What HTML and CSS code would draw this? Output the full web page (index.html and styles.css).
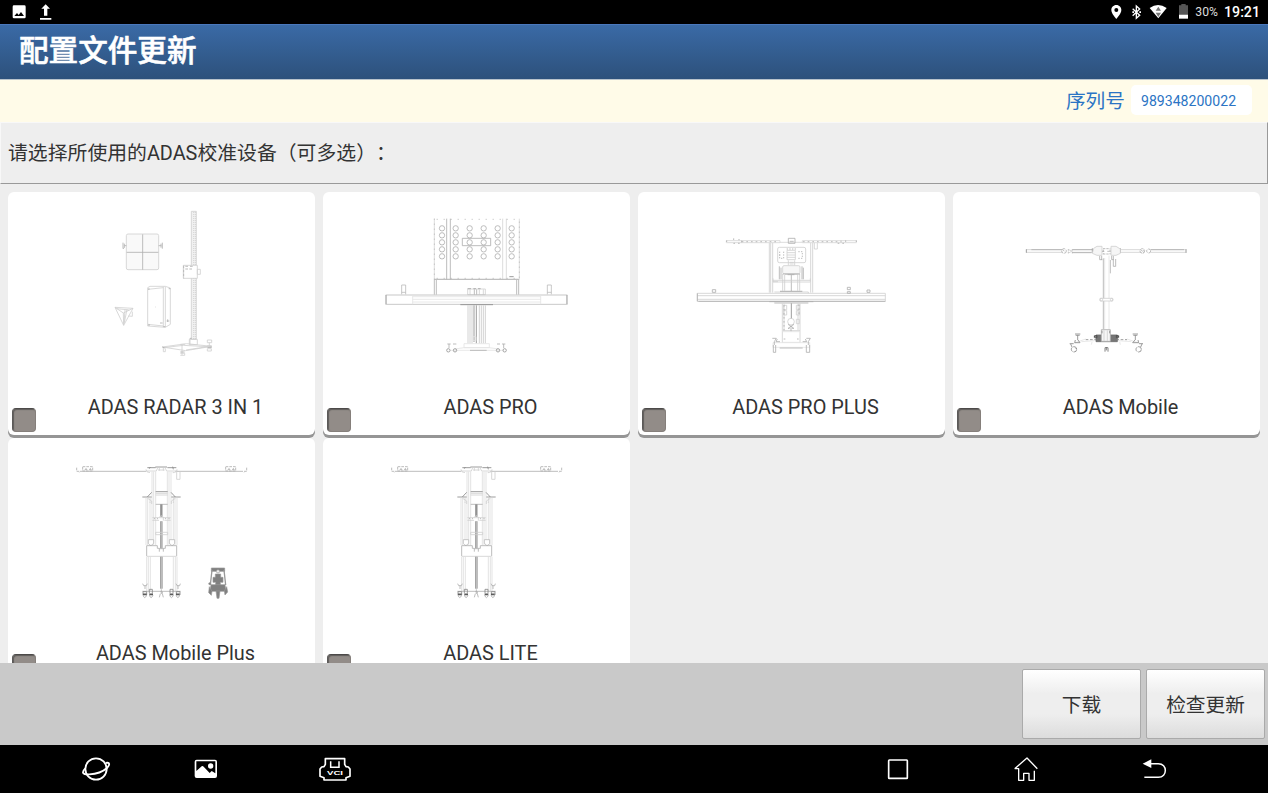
FILE: index.html
```
<!DOCTYPE html>
<html lang="zh-CN">
<head>
    <meta charset="UTF-8">
    <meta name="viewport" content="width=device-width, initial-scale=1.0">
    <title>配置文件更新</title>
    <link rel="stylesheet" href="styles.css">
</head>
<body>

    <div class="status-bar">
        <svg class="status-icons" width="60" height="24" viewBox="0 0 180 72">
            <path fill="#fff" fill-rule="evenodd" d="M42 16h31q4 0 4 4v31q0 4-4 4H42q-4 0-4-4V20q0-4 4-4zM43 48h29l-9-12-7 9-5-6z"/>
            <path fill="#fff" d="M137 13l13 13h-8v21h-10V26h-8zM120 54h34v5h-34z"/>
        </svg>
        <svg class="status-icons" width="80" height="24" viewBox="300 0 240 72">
            <path fill="#fff" fill-rule="evenodd" d="M325 15c-9 0-15 7-15 15 0 11 15 27 15 27s15-16 15-27c0-8-6-15-15-15zm0 9a6 6 0 1 1 0 12 6 6 0 0 1 0-12z"/>
            <path fill="none" stroke="#fff" stroke-width="4" d="M374 26l21 20-10 9V18l10 9-21 20"/>
            <path fill="#fff" d="M373 34h5v5h-5zM394 34h5v5h-5z"/>
            <path fill="#fff" d="M425 24q25-18 51 0l-25 31z"/>
            <path fill="#777" d="M451 20l8 12h-16zM443 38h16l-8 13z"/>
            <path fill="#555" d="M520 12h13v4h7v28h-27V16h7z"/>
            <path fill="#fff" d="M513 44h27v12h-27z"/>
        </svg>
        <span class="battery">30%</span>
        <span class="clock">19:21</span>
    </div>

    <div class="header">配置文件更新</div>

    <div class="serial">
        <span class="serial-label">序列号</span>
        <span class="serial-number">989348200022</span>
    </div>

    <div class="prompt">请选择所使用的ADAS校准设备（可多选）：</div>

    <div class="device-list">
        <div class="device">
            <svg class="drawing" viewBox="24 21 921 570">
                <g class="light">
                    <rect x="379" y="147" width="97" height="107" rx="5" fill="#f8f8f8"/>
                    <path class="mid" d="M428 148v106M380 202h95M369 173v18M373 176v12l-4 3M373 182h6M487 173v18M483 176v12M476 182h8"/>
                    <path d="M574 79h15v384h-15z" fill="#eee"/>
                    <path class="dots" d="M581 82v380M586 82v380"/>
                    <path d="M550 241h42v39h-42zM592 253h9v15h-9z" fill="#fff"/>
                    <path class="mid" d="M551 242v38M556 244h8M570 244h8M556 252h22" stroke-dasharray="8 4"/>
                    <path d="M443 308l7-4h46l15 5v109l-15 9-53-4zM490 305v121M496 305v121M444 418l46 5M444 313l46-5M466 366h2"/>
                    <path class="mid" d="M500 408h8M503 403v8M480 414h8M444 312h5M506 311h5M444 420h6M490 425h6"/>
                    <path d="M345 367l54 3-28 51zM345 367l25 17 29-14M370 384l1 37M375 374l-3 42M381 373l-8 40M350 371l38 4M385 393l12 1v-14"/>
                    <path d="M568 463h24v16h-24zM487 486l73-10 75 8-78 13zM492 488l58-7 72 4-64 10M570 459v20M490 488v12h6v-10M541 478h14M546 479v31M541 505h13v6h-13M622 465h13v8h-13zM628 473v10M622 482h12v5h-12zM622 491h12v7h-12z"/>
                    <path class="mid" d="M487 486l7 3M541 501h13M623 487h12M570 460h5"/>
                </g>
            </svg>
            <div class="device-row"><span class="check"></span><span class="name">ADAS RADAR 3 IN 1</span></div>
        </div>

        <div class="device">
            <svg class="drawing" viewBox="9 21 921 570">
                <defs>
                    <g id="holes">
                        <circle cx="0" cy="0" r="8"/><circle cx="0" cy="21" r="8"/><circle cx="0" cy="42" r="8"/><circle cx="0" cy="63" r="8"/><circle cx="0" cy="84" r="8"/>
                    </g>
                </defs>
                <g class="light">
                    <path d="M343 101v182h255V101" stroke="#ccc"/>
                    <path class="mid" d="M343 101v182M598 110v170" stroke-dasharray="3 12"/>
                    <path d="M380 101v182M391 101v182" stroke="#999"/>
                    <path d="M548 101v182M559 101v182" stroke="#ccc"/>
                    <path class="mid" d="M350 103h246M350 280h246" stroke-dasharray="3 18"/>
                    <g stroke="#999" stroke-width="2.4">
                        <use href="#holes" x="366" y="130"/><use href="#holes" x="407" y="130"/><use href="#holes" x="449" y="130"/>
                        <use href="#holes" x="491" y="130"/><use href="#holes" x="533" y="130"/><use href="#holes" x="575" y="130"/>
                    </g>
                    <path d="M427 160h85v22h-85z" stroke="#999"/>
                    <path class="dark" d="M568 275h13M443 311h10M460 311h8M474 311h8"/>
                    <path class="mid" d="M343 329v-46h253v46M349 285v44M590 285v44"/>
                    <path d="M443 312h53v17h-53zM450 313v16M478 313v16M490 313v16"/>
                    <path class="mid" d="M463 313v16M470 313v16"/>
                    <path d="M245 328v-28h12v28M682 328v-28h12v28M245 322h12M682 322h12" stroke="#aaa"/>
                    <path d="M197 330h545v28H197z" stroke="#aaa"/>
                    <path d="M278 330v28M662 330v28M278 335h384M278 343h384M278 351h384" stroke="#ddd"/>
                    <path class="mid" d="M199 330v27M740 330v27"/>
                    <path class="dark" d="M421 359h98"/>
                    <path d="M444 361v114M450 361v114M456 361v114M478 361v114M484 361v114M490 361v114M496 361v114" stroke="#bbb"/>
                    <path class="dark" d="M462 361v110M469 361v114"/>
                    <path d="M459 455h9v12h-9zM432 476h76v12h-76zM405 492l27-4h76l27 4M390 496h162" stroke="#ddd"/>
                    <path class="mid" d="M382 477h10M387 477v12M399 477h10M531 477h9M546 477h10M551 477v12M450 496h50"/>
                    <g stroke="#777"><circle cx="385" cy="496" r="5"/><circle cx="405" cy="496" r="5"/><circle cx="534" cy="496" r="5"/><circle cx="554" cy="496" r="5"/></g>
                </g>
            </svg>
            <div class="device-row"><span class="check"></span><span class="name">ADAS PRO</span></div>
        </div>

        <div class="device">
            <svg class="drawing" viewBox="9 21 921 570">
                <g class="light">
                    <path d="M274 167h161v6H274zM502 167h162v6H502zM435 172h67" stroke="#ccc"/>
                    <path class="mid" d="M275 166v8M664 166v8M296 160v15h24v-11h-10M608 175h24v-15M618 167v8M320 170h110M504 170h104" stroke-dasharray="5 9"/>
                    <path class="mid" d="M460 160h20v15h-20zM464 169h12"/>
                    <path d="M403 174v149M407 174v149M413 174v149M527 174v149M533 174v149M538 174v18h9v-18"/>
                    <rect x="428" y="187" width="84" height="46" rx="5"/>
                    <path d="M456 196h25v28h-25zM456 203h25M456 210h25M456 217h25"/>
                    <path class="mid" d="M446 200v20h-12v-20M490 200h12v20h-12M432 210h5M455 192h28" stroke-dasharray="4 4"/>
                    <path d="M460 226v15M479 226v15M464 232h12M464 237h12"/>
                    <rect x="443" y="242" width="52" height="24" rx="4" fill="#f6f6f6"/>
                    <path class="mid" d="M433 244v39M438 248v35M501 244v39M505 248v35"/>
                    <path d="M450 268h40M443 267v50M449 270v47M488 270v47M494 267v50"/>
                    <path class="mid" d="M458 269h20M469 270v48M443 267h52"/>
                    <path d="M414 286h112M414 291h112M414 280v10l15 0M526 280v10"/>
                    <path class="dark" d="M435 319h67"/>
                    <path d="M418 321h102v4"/>
                    <path d="M187 325h564v24H187zM187 332h564M187 343h564"/>
                    <path class="mid" d="M187 325v24M190 349h561"/>
                    <path class="mid" d="M403 350h132M418 354h102M232 314h10v8h-10zM637 307h9v7h-9zM637 320h9v5h-9zM696 315h9v7h-9z"/>
                    <path d="M442 356v117M447 356v80M489 356v80M495 356v117M444 437h51M446 361h9v13h-9zM446 377h9v13h-9zM484 361h9v13h-9zM484 377h9v13h-9zM484 403h9v13h-9z"/>
                    <path class="mid" d="M447 360v76M492 358v36M459 430h20M446 462h6M486 462h6" stroke-dasharray="5 7"/>
                    <path class="dark" d="M469 355v46"/>
                    <circle cx="468" cy="410" r="10"/>
                    <path class="mid" d="M459 418l9 6 9-6M459 431l9-8 9 8M468 424v15"/>
                    <path d="M442 472h53M414 473h110v14H414zM442 440h53" stroke="#ddd"/>
                    <path class="mid" d="M412 460h12l-6 10v10M514 460h12l-6 10v10M427 462l-4 8h12M511 462l4 8h-12M434 489h69M415 480v22h7v-22M514 480v22h10v-22"/>
                </g>
            </svg>
            <div class="device-row"><span class="check"></span><span class="name">ADAS PRO PLUS</span></div>
        </div>

        <div class="device">
            <svg class="drawing" viewBox="15 21 921 570">
                <g class="light">
                    <path d="M234 194h109M234 202h109M373 194h60M373 202h60M518 194h60M518 202h60M608 194h108M608 202h108"/>
                    <path class="mid" d="M250 194h93M375 194h57M373 203h57M608 194h100"/>
                    <path class="dark" d="M235 193v10M714 193v10M433 190v14M517 190v14"/>
                    <g class="mid"><circle cx="348" cy="198" r="7" stroke-dasharray="9 3"/><circle cx="583" cy="198" r="7" stroke-dasharray="9 3"/><circle cx="602" cy="198" r="6" stroke-dasharray="9 3"/></g>
                    <path class="mid" d="M361 192v13M373 192v13M578 194l10 9M588 194l-8 9M345 194l6 8" stroke-dasharray="5 3"/>
                    <path d="M362 194l10 4-10 6"/>
                    <path d="M437 190l10-6h15v27h-15l-14-6zM489 184h15l13 8v13l-13 6h-15z" fill="#f4f4f4"/>
                    <path class="mid" d="M465 191h22M462 199h10M478 199h11M465 207h22M466 194v12M486 194v12" stroke-dasharray="7 3"/>
                    <path class="mid" d="M455 213v11h8M461 213v12M491 213v11h5v-11M496 222v22h7v-22M487 225v40"/>
                    <path d="M483 212v222M470 219v214" stroke="#ddd"/>
                    <path class="mid" d="M466 220v212"/>
                    <path d="M456 340h38v8h-38z" fill="#fff"/><circle cx="460" cy="344" r="4"/><circle cx="491" cy="344" r="4"/>
                    <path d="M444 450h64v20h-64z" fill="#555" stroke="#444"/>
                    <path d="M438 455l9-3M513 455l-9-3M439 452h8v6h-8zM505 452h7v6h-7z" stroke="#222"/>
                    <path d="M460 434h27v35h-27z" fill="#f4f4f4" stroke="#999"/><path d="M468 436v32M478 436v32"/>
                    <path class="dark" d="M462 437v10M485 437v10M413 464h32M505 464h32" stroke-dasharray="8 5"/>
                    <path d="M380 474l33-12M572 474l-35-12M400 470l40-3M550 470l-40-3M432 471l-2 8M515 471l2 8" stroke="#ddd"/>
                    <path class="dark" d="M381 447h16M383 451h12M389 451v14M382 465l-2 8h16l-6-8M554 447h16M556 451h12M562 451v14M570 465l2 8h-18l7-8"/>
                    <path class="dark" d="M365 476h12M368 477l4 9M383 489l3 3M573 476h12M582 477l-4 9"/>
                    <g class="dark"><circle cx="378" cy="493" r="8" stroke-dasharray="14 3"/><circle cx="572" cy="493" r="8" stroke-dasharray="14 3"/></g>
                    <path d="M471 500v-12h9v12M475 486v10" stroke="#444"/>
                </g>
            </svg>
            <div class="device-row"><span class="check"></span><span class="name">ADAS Mobile</span></div>
        </div>

        <div class="device">
            <svg class="drawing" viewBox="24 9 921 570">
                <defs>
                    <g id="stand" class="light">
                        <path class="mid" d="M240 109h198M526 109h203"/>
                        <path class="mid" d="M230 98v11h8v4M740 98v11h-8v4M248 95h30v13h-30zM677 95h30v13h-30z" stroke-dasharray="8 3"/>
                        <path class="mid" d="M254 104h8M267 104h8M258 99v5M271 99v5M683 104h8M696 104h8M687 99v5M700 99v5"/>
                        <path class="dark" d="M442 98h25M502 98h27M466 96h35M451 96l-3 5M518 95l2 8"/>
                        <path d="M474 96l-5 12h-32M494 96l6 12h32M474 105h20M478 99v8M490 99v8M438 103q0 10 12 10M531 103q0 10-13 10"/>
                        <path d="M530 110v23h10v-23"/>
                        <path class="faint" d="M456 110v220M461 110v220M467 110v220M502 110v220M507 110v220M513 110v220"/>
                        <path class="dark" d="M467 170h36"/><path d="M467 175h36M467 180h36"/>
                        <path class="dark" d="M427 186h28M514 186h28M455 172l-13 14M513 172l13 14"/>
                        <path class="faint" d="M438 188v142M443 188v142M450 200v130M525 188v142M531 188v142M520 200v130"/>
                        <path d="M443 190l12 8v9M526 190l-12 8v9M450 188v16M520 188v16"/>
                        <path class="mid" d="M467 208h36"/>
                        <path d="M484 208v37M484 259v81" stroke="#777" stroke-width="7"/>
                        <path d="M484 259v80" stroke="#ccc" stroke-width="2"/>
                        <path d="M457 248h55M457 256h20M493 256h19M478 246l6-4 6 4v11M467 292h36v7h-36z"/>
                        <path class="dark" d="M462 251h2M472 251h2M495 251h2M506 251h2"/>
                        <path d="M445 314h16v11l-7 6h-4l-5-6zM508 314h16v11l-5 6h-4l-7-6z" fill="#fff" stroke="#aaa"/>
                        <path class="mid" d="M440 363v-31h32v8h6v10M530 363v-31h-34v8h-6v10M478 341h12"/>
                        <path d="M440 364h90"/>
                        <path class="faint" d="M440 365v104M445 365v104M451 365v104M520 365v104M526 365v104M531 365v104"/>
                        <path d="M484 365v96" stroke="#888" stroke-width="8"/><path d="M484 365v96" stroke="#ccc" stroke-width="2"/>
                        <path class="mid" d="M428 446l3 6h8l3-6M435 452v10M528 446l3 6h8l2-6M534 452v10M427 469h115"/>
                        <path class="dark" d="M429 480v-10h11v10M448 475v-12h9v12M510 475v-12h9v12M529 480v-10h11v10"/>
                        <path d="M429 478h11M448 478h11M509 478h11M528 478h11" stroke="#333" stroke-width="5"/>
                        <path class="mid" d="M429 480q5 16 11 0M448 480q5 16 11 0M509 480q5 16 11 0M528 480q6 16 11 0M481 470h6v6l3 11M481 476l-3 11M484 463v14"/>
                    </g>
                </defs>
                <use href="#stand"/>
                <g fill="#808080" stroke="#999" stroke-width="2">
                    <path d="M634 399h40v10h-40z"/>
                    <path d="M636 405l-5 45M672 405l5 45" stroke-width="4"/>
                    <path d="M646 417h16v10h7v15h-8v12h-14v-12h-8v-15h7z"/>
                    <path d="M633 449h42l3 20h-48z"/>
                    <path d="M628 455l-2 18 8 8 2-12zM680 455l3 16-8 9-2-12zM648 468h12l-3 22h-6z"/>
                    <circle cx="629" cy="446" r="3"/><circle cx="654" cy="409" r="5" fill="#eee"/>
                </g>
            </svg>
            <div class="device-row"><span class="check"></span><span class="name">ADAS Mobile Plus</span></div>
        </div>

        <div class="device">
            <svg class="drawing" viewBox="24 9 921 570">
                <use href="#stand"/>
            </svg>
            <div class="device-row"><span class="check"></span><span class="name">ADAS LITE</span></div>
        </div>
    </div>

    <div class="footer">
        <button class="btn">下载</button>
        <button class="btn">检查更新</button>
    </div>

    <div class="nav-bar">
        <!-- browser -->
        <svg width="40" height="48" viewBox="48 15 120 144">
            <g fill="none" stroke="#fff" stroke-width="5.5">
                <circle cx="108" cy="87" r="32"/>
                <path d="M76 85c-12 12-9 19 12 18 22-1 43-10 53-19 10-10 8-18-3-15"/>
            </g>
        </svg>
        <!-- gallery -->
        <svg width="40" height="48" viewBox="378 15 120 144">
            <path fill="#fff" fill-rule="evenodd" d="M410 59h55q6 0 6 6v43q0 6-6 6h-55q-6 0-6-6V65q0-6 6-6zm-1 5v29l16-14q3-2 6 1l18 19 6-6 11 7V64zm43 6a8 8 0 1 1 0 16 8 8 0 0 1 0-16z"/>
        </svg>
        <!-- VCI -->
        <svg width="40" height="48" viewBox="765 15 120 144">
            <path fill="none" stroke="#fff" stroke-width="5" stroke-linejoin="round" d="M796 56h58v17l4 7 7 1 5 6v22l-12 4v7h-66v-7l-12-4V87l5-6 7-1 4-7z"/>
            <path fill="none" stroke="#fff" stroke-width="4.5" d="M812 64v18h25V64"/>
            <text class="vci" x="825" y="105" textLength="48" lengthAdjust="spacingAndGlyphs">VCI</text>
        </svg>
        <!-- recents -->
        <svg class="recents" width="40" height="48" viewBox="24 15 120 144">
            <rect x="56" y="60" width="56" height="55" rx="2" fill="none" stroke="#fff" stroke-width="5"/>
        </svg>
        <!-- home -->
        <svg width="40" height="48" viewBox="408 15 120 144">
            <path fill="none" stroke="#fff" stroke-width="4" stroke-linejoin="round" d="M434 86l37-32 31 32M434 86h12v35h15v-21h16v21h16V92"/>
        </svg>
        <!-- back -->
        <svg width="40" height="48" viewBox="792 15 120 144">
            <path fill="none" stroke="#fff" stroke-width="4.5" d="M840 71h25c28 0 28 41 0 41h-42"/>
            <path fill="#fff" d="M818 71l26-13v26z"/>
        </svg>
    </div>

</body>
</html>
```
FILE: styles.css
```
* {
    box-sizing: border-box;
}
body {
    display: flex;
    flex-direction: column;
    height: 793px;
    margin: 0;
    overflow: hidden;
    background: #eee;
    color: #333;
    font-family: Roboto, "Noto Sans CJK SC", sans-serif;
}
svg {
    display: block;
    flex: none;
}
.status-bar {
    display: flex;
    align-items: center;
    flex: none;
    height: 24px;
    padding-right: 8px;
    background: #000;
    color: #fff;
}
.status-icons + .status-icons {
    margin-left: auto;
}
.battery {
    margin-left: 7px;
    color: #ddd;
    font-size: 12.2px;
}
.clock {
    margin-left: 6px;
    font-size: 14.2px;
    font-weight: 500;
}
.header {
    flex: none;
    height: 56px;
    padding-left: 19px;
    border-top: 1px solid #4a78bd;
    border-bottom: 1px solid #b9c4cc;
    background: linear-gradient(to bottom, #3a6aa6, #2d517b);
    color: #fff;
    font-size: 29.6px;
    font-weight: 500;
    line-height: 53px;
    -webkit-text-stroke: 0.6px #fff;
}
.serial {
    display: flex;
    justify-content: flex-end;
    flex: none;
    height: 42px;
    padding: 5px 16px 0 0;
    background: #fffbe8;
    color: #2b74c4;
}
.serial-label {
    font-size: 19.7px;
    line-height: 33px;
}
.serial-number {
    width: 121px;
    height: 30px;
    margin-left: 6px;
    padding-left: 10px;
    border-radius: 5px;
    background: #fff;
    font-size: 14.1px;
    line-height: 33px;
}
.prompt {
    flex: none;
    height: 62px;
    padding-left: 7px;
    border: 1px solid #f8f8f8;
    border-right-color: #999;
    border-bottom-color: #999;
    background: #eee;
    font-size: 19.85px;
    line-height: 62px;
    text-spacing-trim: space-all;
}
.device-list {
    display: grid;
    grid-template-columns: repeat(4, 307px);
    grid-auto-rows: 243px;
    gap: 3px 8px;
    flex: 1;
    min-height: 0;
    padding: 8px 8px 0;
    overflow: hidden;
}
.device {
    border-radius: 6px;
    background: #fff;
    box-shadow: 0 3px 0 #959595;
}
.drawing {
    width: 307px;
    height: 190px;
}
.light {
    fill: none;
    stroke: #c4c4c4;
    stroke-width: 2.4;
    opacity: 0.8;
}
.mid {
    stroke: #999;
}
.dark {
    stroke: #666;
}
.faint {
    stroke: #d4d4d4;
}
.dots {
    stroke: #aaa;
    stroke-dasharray: 2 4;
}
.device-row {
    display: flex;
    height: 50px;
    padding-left: 4px;
}
.check {
    width: 24px;
    height: 24px;
    margin-top: 25.5px;
    border: 1px solid #857f7b;
    border-top-color: #4c4a49;
    border-left-color: #5c5a59;
    border-radius: 4px;
    background: #928c88;
    box-shadow: inset 1px 1px 1px #605d5b;
}
.name {
    flex: 1;
    font-size: 19.9px;
    line-height: 52px;
    text-align: center;
}
.footer {
    display: flex;
    justify-content: flex-end;
    gap: 5px;
    flex: none;
    height: 82px;
    padding: 6px 3px 6px 0;
    background: #c9c9c9;
}
.btn {
    width: 119px;
    height: 70px;
    padding: 0 0 2px;
    border: 1px solid #aaa;
    border-radius: 2px;
    background: linear-gradient(to bottom, #fff, #eee 35%, #eee 65%, #dcdcdc);
    color: #333;
    font-family: inherit;
    font-size: 19.7px;
}
.nav-bar {
    display: flex;
    flex: none;
    height: 48px;
    padding-left: 76px;
    gap: 70px;
    background: #000;
}
.nav-bar svg:nth-of-type(3) {
    margin-left: 19px;
}
.nav-bar .recents {
    margin-left: 453px;
}
.nav-bar svg:nth-of-type(n+5) {
    margin-left: 18px;
}
.vci {
    fill: #fff;
    font-family: "Liberation Sans", sans-serif;
    font-size: 15px;
    font-weight: bold;
    text-anchor: middle;
}
```
